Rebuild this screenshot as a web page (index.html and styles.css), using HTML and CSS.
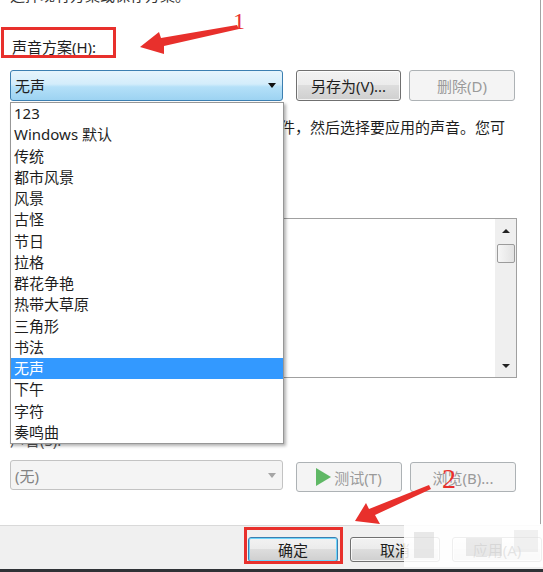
FILE: index.html
```html
<!DOCTYPE html>
<html lang="zh-CN">
<head>
<meta charset="utf-8">
<title>声音方案</title>
<link rel="stylesheet" href="styles.css">
</head>
<body>
<div class="screen">
  <div class="dialog">
    <div class="caption">选择现有方案或保存方案。</div>
    <div class="label first">声音方案(H):</div>
    <div class="row top-row">
      <div class="combo active"><span>无声</span><i class="caret"></i></div>
      <button class="btn">另存为(V)...</button>
      <button class="btn disabled">删除(D)</button>
    </div>
    <p class="desc"><span class="line">若要更改声音，请在下列表中单击程序事件，然后选择要应用的声音。您可</span><span class="line">以将修改后的方案另存为新方案。</span></p>
    <div class="label ev">程序事件(E):</div>
    <div class="events">
      <div class="events-body"></div>
      <div class="scroll">
        <i class="arr up"></i>
        <div class="thumb"></div>
        <div class="track"></div>
        <i class="arr down"></i>
      </div>
    </div>
    <div class="check"><i class="box"></i>播放 Windows 启动声音(P)</div>
    <div class="label snd">声音(S):</div>
    <div class="row bottom-row">
      <div class="combo off"><span>(无)</span><i class="caret grey"></i></div>
      <button class="btn disabled lower"><svg class="play" width="15" height="18" viewBox="0 0 15 18"><polygon points="0,0 15,9 0,18" fill="#5fb865"/></svg>测试(T)</button>
      <button class="btn disabled lower">浏览(B)...</button>
    </div>
  </div>
  <div class="footer">
    <button class="btn default">确定</button>
    <button class="btn">取消</button>
    <button class="btn">应用(A)</button>
  </div>
  <div class="taskbar"></div>

  <ul class="droplist">
    <li>123</li>
    <li>Windows 默认</li>
    <li>传统</li>
    <li>都市风景</li>
    <li>风景</li>
    <li>古怪</li>
    <li>节日</li>
    <li>拉格</li>
    <li>群花争艳</li>
    <li>热带大草原</li>
    <li>三角形</li>
    <li>书法</li>
    <li class="sel">无声</li>
    <li>下午</li>
    <li>字符</li>
    <li>奏鸣曲</li>
  </ul>

  <div class="watermark"><i class="w1"></i><i class="w2"></i><i class="w3"></i></div>

  <div class="redbox box1"></div>
  <div class="redbox box2"></div>
  <svg class="arrows" width="543" height="572" viewBox="0 0 543 572">
    <polygon points="140,47 159,32 161,38 237,25 239,29 164,46 164,54" fill="#e8302c"/>
    <polygon points="355,521 366,503 369,509 429,485 431,489 375,515 380,524" fill="#e8302c"/>
  </svg>
  <div class="num n1">1</div>
  <div class="num n2">2</div>
</div>
</body>
</html>
```

FILE: styles.css
```css
* { box-sizing: border-box; }
html, body { margin: 0; padding: 0; }
body {
  width: 543px;
  height: 572px;
  overflow: hidden;
  background: #ffffff;
  font-family: "Noto Sans", "Noto Sans CJK SC", sans-serif;
  font-size: 15px;
  color: #1e1e1e;
}
.screen {
  position: relative;
  width: 543px;
  height: 572px;
  overflow: hidden;
}
.dialog {
  width: 541px;
  height: 525px;
  padding-left: 10px;
  border-right: 1px solid #a3a3a3;
  overflow: hidden;
  background: #fff;
}
.caption {
  margin-top: -14px;
  height: 18px;
  line-height: 18px;
  color: #333;
  white-space: nowrap;
}
.label {
  height: 22px;
  line-height: 22px;
  white-space: nowrap;
}
.label.first { margin-top: 32px; padding-left: 2px; }
.row {
  display: flex;
  align-items: flex-start;
}
.top-row { margin-top: 12px; height: 31px; }
.combo {
  width: 273px;
  height: 31px;
  border-radius: 3px;
  display: flex;
  align-items: center;
  justify-content: space-between;
  padding: 0 6px 0 4px;
  margin-right: 13px;
}
.combo.active {
  border: 1px solid #3c7fb1;
  background: linear-gradient(#e6f4fc 0%, #d3edfb 45%, #b4e0f8 55%, #9dd3f2 100%);
}
.combo.off {
  height: 30px;
  border: 1px solid #c3c3c3;
  background: #f4f4f4;
  color: #838383;
}
.caret {
  width: 0;
  height: 0;
  border-left: 4px solid transparent;
  border-right: 4px solid transparent;
  border-top: 5px solid #111;
}
.caret.grey { border-top-color: #a5a5a5; }
.btn {
  font: inherit;
  color: #1e1e1e;
  width: 105px;
  height: 31px;
  padding: 0;
  border: 1px solid #707070;
  border-radius: 3px;
  background: linear-gradient(#f2f2f2 0%, #ebebeb 50%, #dddddd 50%, #cfcfcf 100%);
  box-shadow: inset 0 0 0 1px rgba(255,255,255,0.75);
  display: flex;
  align-items: center;
  justify-content: center;
  margin-right: 8px;
}
.btn.disabled {
  border-color: #adb2b5;
  background: #f4f4f4;
  box-shadow: none;
  color: #9a9a9a;
  width: 106px;
}
.btn.lower { margin-top: 2px; height: 30px; }
.play { margin-right: 3px; }
.desc {
  margin: 16px 0 0;
  line-height: 21px;
}
.desc .line { display: block; white-space: nowrap; }
.label.ev { margin-top: 20px; }
.events {
  margin-top: 17px;
  width: 507px;
  height: 160px;
  border: 1px solid #a0a0a0;
  display: flex;
  background: #fff;
}
.events-body { flex: 1; }
.scroll {
  width: 21px;
  background: #efefef;
  display: flex;
  flex-direction: column;
  align-items: center;
  padding: 10px 0 9px;
}
.arr {
  width: 0;
  height: 0;
  border-left: 4px solid transparent;
  border-right: 4px solid transparent;
}
.arr.up { border-bottom: 4px solid #222; }
.arr.down { border-top: 4px solid #222; }
.thumb {
  margin-top: 11px;
  width: 18px;
  height: 19px;
  border: 1px solid #9b9b9b;
  border-radius: 2px;
  background: linear-gradient(90deg, #f6f6f6, #e2e2e2);
}
.track { flex: 1; }
.check {
  margin-top: 10px;
  height: 22px;
  line-height: 22px;
  display: flex;
  align-items: center;
  gap: 6px;
}
.check .box {
  width: 13px;
  height: 13px;
  border: 1px solid #8e8f8f;
  background: #f4f4f4;
}
.label.snd { margin-top: 19px; color: #555; }
.bottom-row { margin-top: 9px; }
.footer {
  height: 44px;
  border-top: 1px solid #d9d9d9;
  background: #f0f0f0;
  display: flex;
  align-items: flex-start;
  padding: 11px 0 0 248px;
  gap: 12px;
}
.footer .btn {
  width: 90px;
  height: 25px;
  margin: 0;
  flex: none;
}
.btn.default {
  border-color: #3c7fb1;
  box-shadow: inset 0 0 0 1px #6fd6fb;
}
.taskbar {
  height: 3px;
  background: #2f3236;
}
.droplist {
  position: absolute;
  left: 10px;
  top: 102px;
  width: 274px;
  height: 342px;
  margin: 0;
  padding: 0;
  list-style: none;
  background: #fff;
  border: 1px solid #979797;
  box-shadow: 2px 2px 3px rgba(0,0,0,0.3);
}
.droplist li {
  height: 21.25px;
  line-height: 21.25px;
  padding-left: 3px;
  white-space: nowrap;
}
.droplist li.sel {
  background: #3399ff;
  color: #fff;
}
.watermark {
  position: absolute;
  left: 404px;
  top: 524px;
  width: 139px;
  height: 43px;
  background: rgba(255,255,255,0.88);
}
.watermark i {
  position: absolute;
  background: rgba(200,200,200,0.4);
}
.watermark .w1 { left: 10px; top: 8px; width: 20px; height: 26px; }
.watermark .w2 { left: 62px; top: 14px; width: 36px; height: 18px; background: rgba(190,190,190,0.3); }
.watermark .w3 { left: 110px; top: 6px; width: 24px; height: 22px; background: rgba(215,215,215,0.35); }
.redbox {
  position: absolute;
  border: 3px solid #e8302c;
}
.box1 { left: 1px; top: 27px; width: 115px; height: 31px; }
.box2 { left: 244px; top: 527px; width: 99px; height: 37px; }
.arrows { position: absolute; left: 0; top: 0; }
.num {
  position: absolute;
  font-family: "Liberation Serif", serif;
  color: #e8302c;
  line-height: 1;
}
.n1 { left: 233px; top: 9px; font-size: 24px; }
.n2 { left: 442px; top: 465px; font-size: 28px; }
```
